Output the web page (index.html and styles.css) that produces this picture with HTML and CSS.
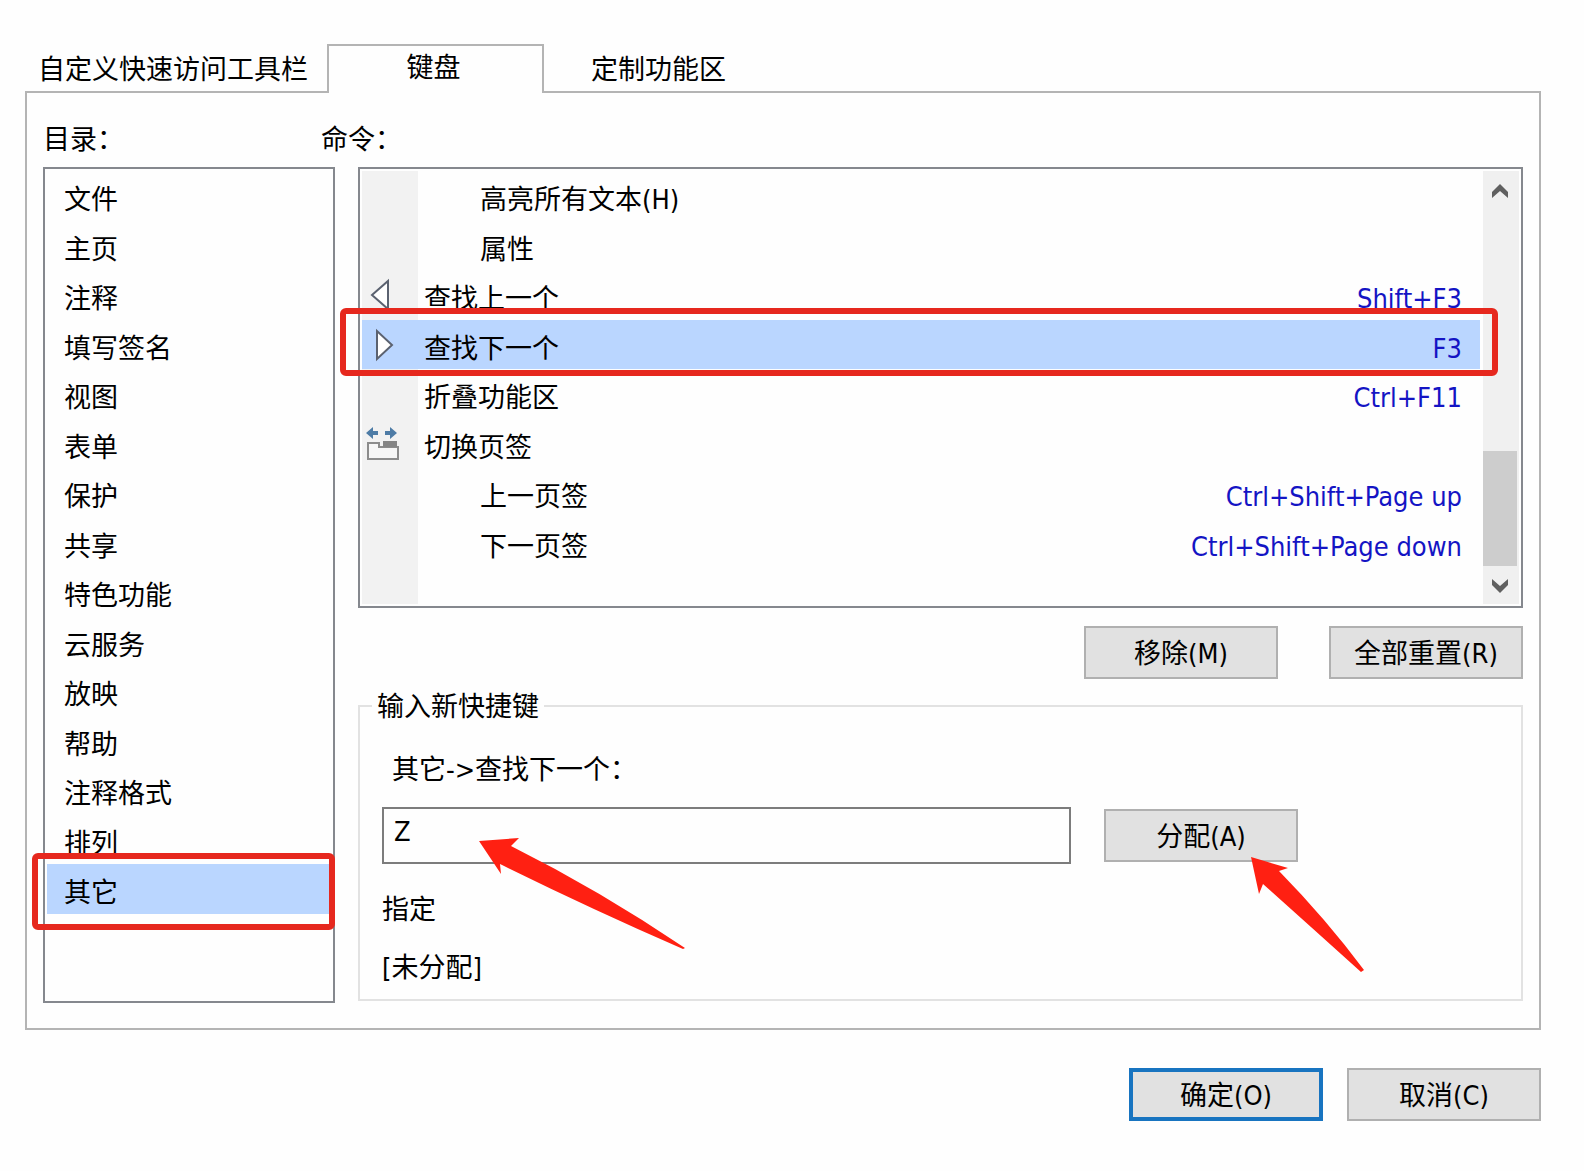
FILE: index.html
```html
<!DOCTYPE html>
<html lang="zh-CN">
<head>
    <meta charset="UTF-8">
    <meta name="viewport" content="width=device-width, initial-scale=1.0">
    <title>自定义</title>
    <link rel="stylesheet" href="styles.css">
</head>
<body>
    <main class="dialog">
        <div class="tabs" role="tablist">
            <button class="tab" type="button" role="tab">自定义快速访问工具栏</button>
            <button class="tab active" type="button" role="tab" aria-selected="true">键盘</button>
            <button class="tab" type="button" role="tab">定制功能区</button>
        </div>
        <section class="panel" role="tabpanel">
            <div class="headings">
                <span class="heading" id="category-label">目录：</span>
                <span class="heading" id="command-label">命令：</span>
            </div>
            <div class="columns">
                <ul class="listbox categories" role="listbox" aria-labelledby="category-label">
                    <li role="option">文件</li>
                    <li role="option">主页</li>
                    <li role="option">注释</li>
                    <li role="option">填写签名</li>
                    <li role="option">视图</li>
                    <li role="option">表单</li>
                    <li role="option">保护</li>
                    <li role="option">共享</li>
                    <li role="option">特色功能</li>
                    <li role="option">云服务</li>
                    <li role="option">放映</li>
                    <li role="option">帮助</li>
                    <li role="option">注释格式</li>
                    <li role="option">排列</li>
                    <li class="selected" role="option" aria-selected="true">其它<span class="marker"></span></li>
                </ul>
                <div class="details">
                    <div class="listbox command-box">
                        <ul class="commands" role="listbox" aria-labelledby="command-label">
                            <li role="option"><span class="icon"></span><span class="name sub">高亮所有文本(H)</span></li>
                            <li role="option"><span class="icon"></span><span class="name sub">属性</span></li>
                            <li role="option">
                                <span class="icon"><svg width="34" height="34" viewBox="0 0 34 34"><path d="M22 3V31L6 17Z" fill="#fff" stroke="#5b6270" stroke-width="2"/></svg></span>
                                <span class="name">查找上一个</span>
                                <kbd>Shift+F3</kbd>
                            </li>
                            <li class="selected" role="option" aria-selected="true">
                                <span class="icon"><svg width="34" height="34" viewBox="0 0 34 34"><path d="M11 3V31L26 17Z" fill="#fff" stroke="#5b6270" stroke-width="2"/></svg></span>
                                <span class="name">查找下一个</span>
                                <kbd>F3</kbd>
                                <span class="marker"></span>
                            </li>
                            <li role="option"><span class="icon"></span><span class="name">折叠功能区</span><kbd>Ctrl+F11</kbd></li>
                            <li role="option">
                                <span class="icon"><svg width="34" height="34" viewBox="0 0 34 34"><path d="M0 6L7 0V4H12V8H7V12ZM31 6L24 0V4H19V8H24V12Z" fill="#4e7ca6"/><path d="M2 16H13V20H32V32H2Z" fill="#f6f6f6" stroke="#8c8c8c" stroke-width="2"/><path d="M17 14H31V20H17Z" fill="#858585"/></svg></span>
                                <span class="name">切换页签</span>
                            </li>
                            <li role="option"><span class="icon"></span><span class="name sub">上一页签</span><kbd>Ctrl+Shift+Page up</kbd></li>
                            <li role="option"><span class="icon"></span><span class="name sub">下一页签</span><kbd>Ctrl+Shift+Page down</kbd></li>
                        </ul>
                        <div class="scrollbar">
                            <button class="scroll-btn" type="button" aria-label="向上滚动"><svg width="18" height="16" viewBox="0 0 18 16"><path d="M9 1L17 9V15L9 8L1 15V9Z" fill="#606060"/></svg></button>
                            <div class="thumb"></div>
                            <button class="scroll-btn" type="button" aria-label="向下滚动"><svg width="18" height="16" viewBox="0 0 18 16"><path d="M9 15L17 7V1L9 8L1 1V7Z" fill="#606060"/></svg></button>
                        </div>
                    </div>
                    <div class="list-actions">
                        <button class="btn" type="button">移除(M)</button>
                        <button class="btn" type="button">全部重置(R)</button>
                    </div>
                    <fieldset class="shortcut">
                        <legend>输入新快捷键</legend>
                        <label class="path" for="shortcut-key">其它-&gt;查找下一个：</label>
                        <div class="assign">
                            <div class="field">
                                <input type="text" id="shortcut-key" value="Z">
                                <svg class="arrow arrow-input" width="208" height="114" viewBox="0 0 208 114"><path d="M0 3L40 0L32 8Q120 52 206 110L204 111Q110 70 21 26L22 36Z" fill="#ff2012"/></svg>
                            </div>
                            <div class="field-btn">
                                <button class="btn" type="button">分配(A)</button>
                                <svg class="arrow arrow-assign" width="116" height="118" viewBox="0 0 116 118"><path d="M0 0L37 11L28 14Q75 62 113 113L110 115Q60 70 12 27L8 37Z" fill="#ff2012"/></svg>
                            </div>
                        </div>
                        <p class="assigned-title">指定</p>
                        <p class="assigned">[未分配]</p>
                    </fieldset>
                </div>
            </div>
        </section>
        <div class="footer">
            <button class="btn default" type="button">确定(O)</button>
            <button class="btn" type="button">取消(C)</button>
        </div>
    </main>
</body>
</html>
```
FILE: styles.css
```css
* {
    box-sizing: border-box;
}
body {
    margin: 0;
    background-color: #fefefe;
}
body,
button,
input,
kbd {
    font-family: "DejaVu Sans Condensed", "Noto Sans CJK SC", sans-serif;
    font-size: 27px;
    line-height: 36px;
    color: #000;
}
ul,
p {
    list-style: none;
    margin: 0;
    padding: 0;
}
.dialog {
    padding: 44px 43px 52px 25px;
}

/* tabs */
.tabs {
    display: flex;
    gap: 6px;
    height: 48px;
}
.tab {
    min-width: 217px;
    padding: 4px 13px 0;
    background: none;
    border: none;
}
.tab.active {
    position: relative;
    height: 49px;
    padding: 0 17px 3px 13px;
    background-color: #fefefe;
    border: 2px solid #b4b4b4;
    border-bottom: none;
}
.panel {
    margin-top: -1px;
    padding: 27px 16px 25px;
    border: 2px solid #b4b4b4;
}
.headings {
    display: flex;
    margin-bottom: 7px;
    line-height: 40px;
}
.heading {
    min-width: 278px;
}
.columns {
    display: grid;
    grid-template-columns: 292px 1fr;
    gap: 23px;
}

/* lists */
.listbox {
    padding: 2px;
    border: 2px solid #85888e;
}
.categories,
.commands {
    display: grid;
    grid-auto-rows: 50px 49px;
    align-content: start;
}
.categories li {
    padding: 11px 17px 0;
}
.selected {
    position: relative;
    z-index: 1;
    background-color: #bad6ff;
}
.marker {
    position: absolute;
    inset: -12px -18px -7px -22px;
    border: 6px solid #e6281e;
    border-radius: 6px;
}
.categories .marker {
    inset: -11px -4px -16px -15px;
}
.command-box {
    display: flex;
    gap: 3px;
    height: 441px;
}
.commands {
    flex: 1;
    background: linear-gradient(to right, #f2f2f2 56px, transparent 56px);
}
.commands li {
    display: flex;
    padding: 11px 18px 0 0;
}
.icon {
    width: 62px;
    padding-left: 4px;
}
.icon svg {
    display: block;
    margin-top: -3px;
}
.name {
    flex: 1;
}
.name.sub {
    padding-left: 56px;
}
kbd {
    color: #1414c4;
}
.scrollbar {
    display: flex;
    flex-direction: column;
    width: 36px;
    background-color: #f0f0f0;
}
.scroll-btn {
    display: flex;
    align-items: center;
    justify-content: center;
    height: 38px;
    padding: 2px 2px 0 0;
    background: none;
    border: none;
}
.thumb {
    height: 115px;
    margin-top: auto;
    margin-right: 2px;
    background-color: #cdcdcd;
}

/* buttons */
.btn {
    width: 194px;
    height: 53px;
    padding: 2px 0 0;
    background-color: #e1e1e1;
    border: 2px solid #b0b0b0;
}
.btn.default {
    border: 4px solid #1874c0;
}
.list-actions {
    display: flex;
    justify-content: flex-end;
    gap: 51px;
    margin: 18px 0 8px;
}

/* shortcut entry */
.shortcut {
    margin: 0 0 2px;
    padding: 0 22px 13px;
    border: 2px solid #e2e2e2;
}
.shortcut legend {
    margin-left: -10px;
    padding: 2px 5px 0;
}
.path {
    display: block;
    margin: 27px 0 19px 10px;
}
.assign {
    display: flex;
    align-items: center;
    gap: 33px;
    padding-right: 201px;
    margin-bottom: 28px;
}
.field {
    position: relative;
    flex: 1;
}
.field input {
    display: block;
    width: 100%;
    height: 57px;
    padding: 0 10px 8px;
    background-color: #fefefe;
    border: 2px solid #7c7c7c;
}
.field-btn {
    position: relative;
}
.arrow {
    position: absolute;
    z-index: 1;
}
.arrow-input {
    top: 31px;
    left: 97px;
}
.arrow-assign {
    top: 48px;
    left: 147px;
}
.assigned-title {
    margin-bottom: 22px;
}
.footer {
    display: flex;
    justify-content: flex-end;
    gap: 24px;
    margin-top: 38px;
}
```
